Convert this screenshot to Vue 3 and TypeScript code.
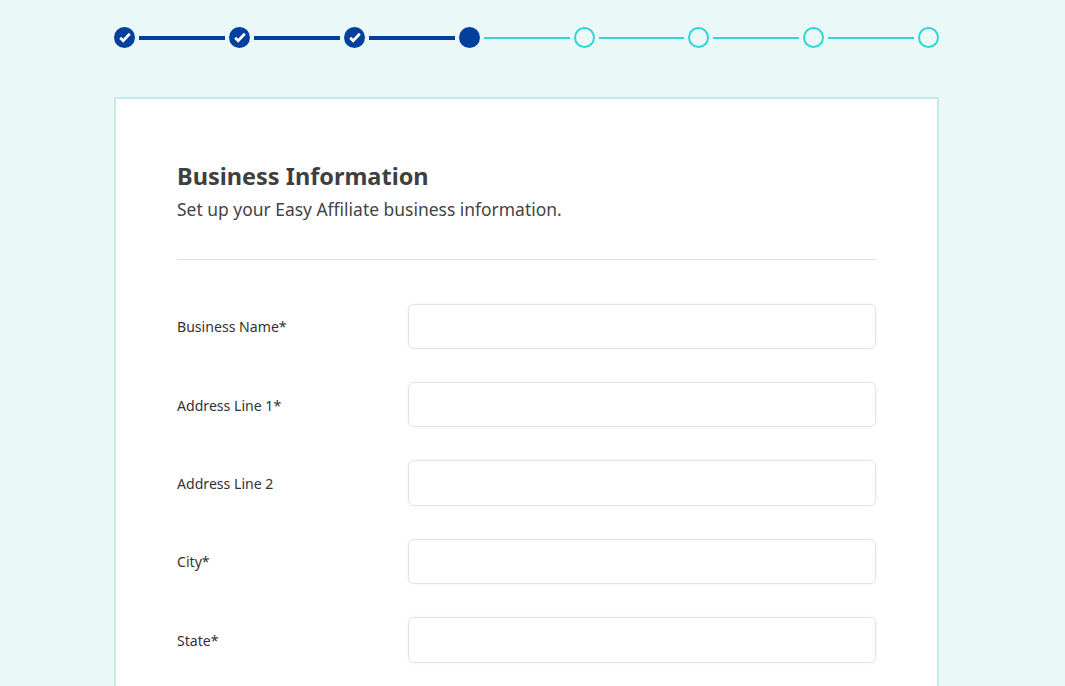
<script setup lang="ts">
const steps = ['done', 'done', 'done', 'current', 'todo', 'todo', 'todo', 'todo'];
const fields = ['Business Name*', 'Address Line 1*', 'Address Line 2', 'City*', 'State*'];
</script>

<template>
  <div class="shell">
    <div class="page">
      <div class="stepper">
        <template v-for="(s, i) in steps" :key="i">
          <div v-if="i > 0" class="line" :class="steps[i] === 'todo' ? 'line-todo' : 'line-done'"></div>
          <div class="dot" :class="'dot-' + s">
            <svg v-if="s === 'done'" width="21" height="21" viewBox="0 0 21 21">
              <path d="M6.2 10.8 L9.2 13.8 L15.8 6.8" fill="none" stroke="#fff" stroke-width="2.7" />
            </svg>
          </div>
        </template>
      </div>
      <div class="card">
        <h1 class="title">Business Information</h1>
        <p class="sub">Set up your Easy Affiliate business information.</p>
        <hr class="rule" />
        <div v-for="f in fields" :key="f" class="row">
          <label class="label">{{ f }}</label>
          <input class="input" type="text" />
        </div>
      </div>
    </div>
  </div>
</template>

<style>
html, body { margin: 0; height: 100%; overflow: hidden; background: #eaf8f8; }
</style>

<style scoped>
.shell { width: 1053px; }
.page {
  width: 825px;
  margin: 0 auto;
  padding: 27px 0 0;
  font-family: "Noto Sans", "Open Sans", sans-serif;
}
.stepper { display: flex; align-items: center; height: 21px; padding-left: .15px; }
.dot { width: 21px; height: 21px; border-radius: 50%; box-sizing: border-box; flex: none; }
.dot svg { display: block; }
.dot-done, .dot-current { background: #03409e; }
.dot-todo { border: 2px solid #2ed7d3; }
.line { flex: 1; margin: 0 4px; }
.line-done { height: 4px; background: #03409e; }
.line-todo { height: 2px; background: #2ed7d3; }
.card {
  margin-top: 49px;
  background: #fff;
  border: 2px solid #c0ecea;
  padding: 61px 61px 60px;
  box-sizing: border-box;
}
.title { margin: 0; font-size: 23.5px; line-height: 33px; font-weight: 700; color: #3f3f3f; }
.sub { margin: 3px 0 0; font-size: 17.45px; line-height: 26px; font-weight: 400; color: #444; }
.rule { margin: 37px 0 43.6px; border: 0; border-top: 1px solid #e0e0e0; }
.row { display: flex; align-items: center; margin-bottom: 33px; }
.label { width: 231px; flex: none; font-size: 14.1px; padding-top: 1px; color: #333; }
.input {
  flex: 1;
  height: 45.4px;
  box-sizing: border-box;
  border: 1px solid #e4e4e4;
  border-radius: 6px;
  background: #fff;
  box-shadow: 0 0 4px rgba(0, 0, 0, .05);
  outline: none;
}
</style>
